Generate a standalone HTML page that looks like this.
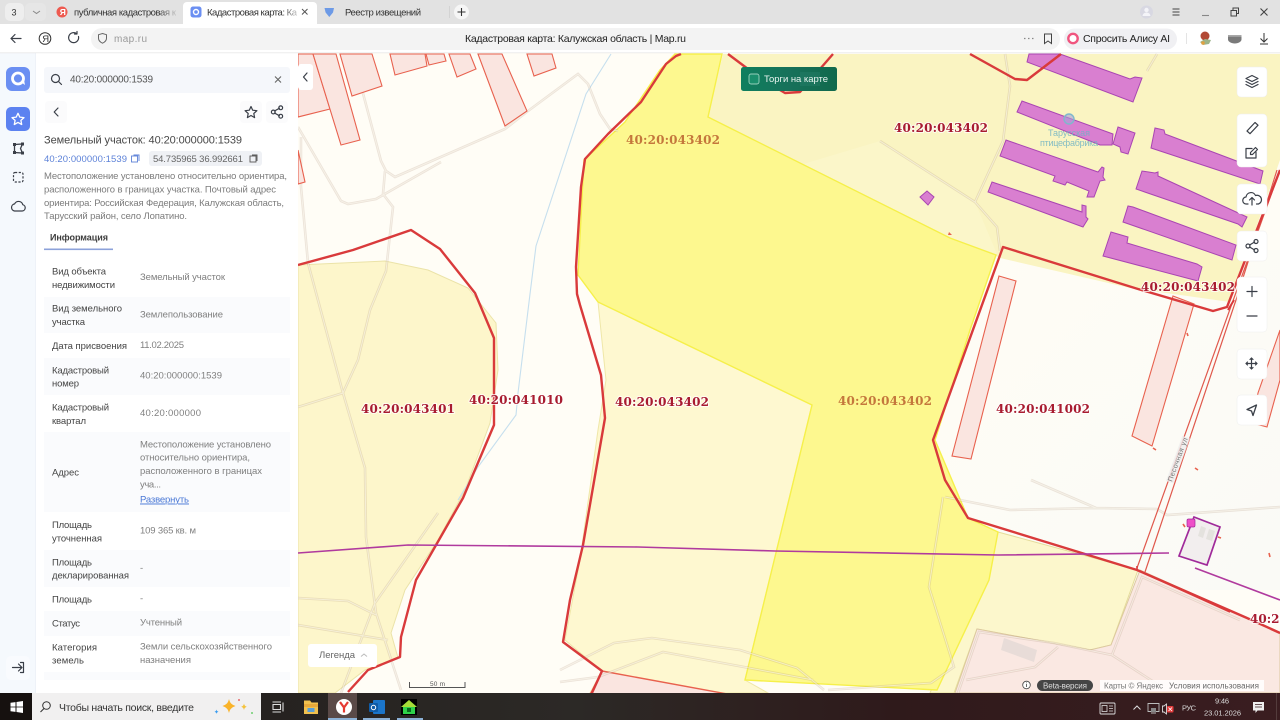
<!DOCTYPE html>
<html lang="ru"><head><meta charset="utf-8"><title>Кадастровая карта</title>
<style>
html,body{margin:0;padding:0;width:1280px;height:720px;overflow:hidden;background:#fff}
svg{display:block;position:absolute;left:0;top:0;filter:blur(.3px)}
text{font-family:"Liberation Sans",sans-serif}
.l{font-size:9.5px;fill:#444}
.v{font-size:9.5px;fill:#808080}
.d{font-size:9.5px;fill:#7c7c7c}
.lab{font-family:"DejaVu Serif",serif;font-weight:bold;font-size:12px;fill:#a81c30;paint-order:stroke;stroke:#fff;stroke-opacity:.75;stroke-width:2px}
.or{fill:#c4773c;stroke:none}
.rd{fill:none;stroke:#d93a3b;stroke-width:2.4;stroke-linejoin:round}
.pk{fill:#fae5e0;stroke:#e8614e;stroke-width:1.1}
.pb{fill:#d97fd0;stroke:#a945b2;stroke-width:1}
.ro{fill:none;stroke:#a88a70;stroke-opacity:.22;stroke-width:2.6}
.ri{fill:none;stroke:#fffdf3;stroke-opacity:.55;stroke-width:1}
.ic{fill:none;stroke:#3a3f48;stroke-width:1.2;stroke-linecap:round;stroke-linejoin:round}
</style></head><body>
<svg width="1280" height="720" viewBox="0 0 1280 720" xmlns="http://www.w3.org/2000/svg">
<defs>
<clipPath id="m"><rect x="298" y="53" width="982" height="640"/></clipPath>
<linearGradient id="tb" x1="0" x2="1"><stop offset="0" stop-color="#201c1b"/><stop offset=".45" stop-color="#2c2926"/><stop offset=".7" stop-color="#2f1a1b"/><stop offset="1" stop-color="#3a1d20"/></linearGradient>
<linearGradient id="fd" x1="0" x2="1"><stop offset=".82" stop-color="#333"/><stop offset="1" stop-color="#ccc"/></linearGradient>
<linearGradient id="gr" x1="0" x2="1"><stop offset="0" stop-color="#0f7f5e"/><stop offset=".5" stop-color="#17715a"/><stop offset="1" stop-color="#11694c"/></linearGradient>
<linearGradient id="wb" x1="0" y1="0" x2="1" y2="1"><stop offset="0" stop-color="#fffdf5"/><stop offset="1" stop-color="#fafaf6"/></linearGradient>
</defs>

<!-- MAP -->
<g clip-path="url(#m)">
<rect x="298" y="53" width="982" height="640" fill="#fffdf6"/>
<rect x="940" y="250" width="340" height="340" fill="url(#wb)"/>
<!-- zones -->
<polygon points="723,54 1280,54 1280,160 1230,302 1130,288 1000,258 994,255 950,238 708,117" fill="#faf4c2"/>
<polygon points="880,141 975,202 997,254 950,238 800,165" fill="#fbf6c9"/>
<polygon points="298,265 385,261 428,270 468,288 496,323 498,370 490,423 465,490 438,540 405,590 391,633 398,658 365,670 335,693 298,693" fill="#fdf6cb" stroke="#ebe3a8" stroke-width="1"/>
<polygon points="598,302 812,405 745,680 768,693 590,693 602,671 565,640 580,560 598,430 606,380" fill="#fef8d0" stroke="#efe7a8" stroke-width="1"/>
<polygon points="998,532 1138,570 1111,645 1090,650 977,629 954,693 930,693" fill="#fcf7cc" stroke="#e5dc9a" stroke-width="1"/>
<polygon points="955,693 977,629 1090,650 1111,645 1140,570 1280,633 1280,693" fill="#fae8e2" stroke="#dcc9a0" stroke-width="1"/>
<polygon points="675,54 722,54 708,117 950,238 996,255 970,330 935,440 968,518 998,532 989,580 937,690 745,680 812,405 598,302 578,275 584,160 625,122 660,70" fill="#fdf88f" stroke="#f6f04a" stroke-width="1.4"/>
<polygon points="602,671 760,700 580,700 591,693" fill="#fae5e0" stroke="#e8614e" stroke-width="1.4"/>
<!-- stream -->
<polyline points="611,54 586,94 536,246 530,294 518,393 516,415 478,467 458,500" fill="none" stroke="#c6dfee" stroke-width="1.1"/>
<!-- roads -->
<path class="ro" d="M343 54L356 67L381 161L386 171L395 177L505 129L528 111L578 74L588 84L600 114L610 129L618 131M298 127L305 139L341 201L348 204L376 199L441 162M385 171L383 194L393 207L386 271L370 310L358 360L343 393L365 468L366 537L376 613L401 690M301 137L301 187L308 263L343 393M298 407L343 393M298 598L348 601L376 615M298 625L388 640M341 693L375 603L438 513M560 670L614 643L652 638L740 650L797 668L824 690M560 682L598 677L663 652L744 667L813 680M943 497L929 587L954 667L931 683L828 690M945 497L1010 510L1096 508L1157 509L1167 515L1280 507M1031 480L1096 508M966 680L1035 667L1058 647M958 693L979 632L1054 643L1112 655L1160 686M1112 655L1142 577L1240 620M1005 54L1010 86L1003 141L975 202L997 227L1000 251M880 141L975 202M1157 54L1147 71"/>
<path class="ri" d="M343 54L356 67L381 161L386 171L395 177L505 129L528 111L578 74L588 84L600 114L610 129L618 131M298 127L305 139L341 201L348 204L376 199L441 162M385 171L383 194L393 207L386 271L370 310L358 360L343 393L365 468L366 537L376 613L401 690M301 137L301 187L308 263L343 393M298 407L343 393M298 598L348 601L376 615M298 625L388 640M341 693L375 603L438 513M560 670L614 643L652 638L740 650L797 668L824 690M560 682L598 677L663 652L744 667L813 680M943 497L929 587L954 667L931 683L828 690M945 497L1010 510L1096 508L1157 509L1167 515L1280 507M1031 480L1096 508M966 680L1035 667L1058 647M958 693L979 632L1054 643L1112 655L1160 686M1112 655L1142 577L1240 620M1005 54L1010 86L1003 141L975 202L997 227L1000 251M880 141L975 202M1157 54L1147 71"/>
<!-- pink parcels -->
<polygon class="pk" points="298,54 313,54 330,109 298,117"/>
<polygon class="pk" points="298,150 305,182 298,184"/>
<polygon class="pk" points="313,54 336,54 360,140 341,145"/>
<polygon class="pk" points="340,54 372,54 382,86 352,96"/>
<polygon class="pk" points="390,54 425,54 427,66 395,75"/>
<polygon class="pk" points="426,54 444,54 446,61 429,65"/>
<polygon class="pk" points="449,54 470,54 476,69 457,77"/>
<polygon class="pk" points="478,54 502,54 527,111 505,126"/>
<polygon class="pk" points="527,54 552,54 556,68 534,76"/>
<polygon class="pk" points="999,276 1016,281 971,459 952,456"/>
<polygon class="pk" points="1173,296 1194,304 1152,446 1132,436"/>
<polygon class="pk" points="1280,330 1258,393 1252,423 1267,427 1280,380"/>
<path d="M1153 448l3 2M1187 333l1 3M1195 468l3 2M1269 553l1 4M1183 524l2 3M1218 537l3 1" stroke="#e8614e" stroke-width="1.6" fill="none"/>
<!-- road parcel lines -->
<path d="M1280 170L1137 568M1236 300L1145 572M1277 170L1236 300" fill="none" stroke="#e0584c" stroke-width="1.2"/>
<path d="M1234 300L1228 310" stroke="#d93a3b" stroke-width="2"/>
<!-- buildings -->
<polygon class="pb" points="1027,62 1029,54 1060,54 1130,79 1135,77 1142,78 1133,102"/>
<polygon class="pb" points="1017,112 1022,101 1113,134 1112,145 1100,145"/>
<polygon class="pb" points="1118,127 1135,133 1128,154 1121,152 1120,147 1113,144"/>
<polygon class="pb" points="1000,156 1006,140 1098,172 1102,167 1104,168 1103,177 1105,180 1100,181 1094,197 1087,197 1089,191 1067,182 1065,185 1053,181 1055,176"/>
<polygon class="pb" points="988,192 992,182 1082,212 1082,205 1086,206 1086,217 1088,219 1083,227"/>
<polygon class="pb" points="1151,148 1155,128 1164,130 1165,134 1263,171 1260,184"/>
<polygon class="pb" points="1136,189 1142,171 1155,173 1158,172 1158,176 1247,217 1242,227 1238,224"/>
<polygon class="pb" points="1123,222 1128,206 1133,207 1236,245 1232,260"/>
<polygon class="pb" points="1103,256 1111,232 1128,237 1127,243 1197,264 1202,267 1198,281"/>
<polygon class="pb" points="920,197 927,191 934,197 928,205"/>
<path d="M949 232l3 3l-4 0z" fill="#e8614e"/>
<circle cx="1069" cy="119" r="5" fill="#a8a0d8" fill-opacity=".6" stroke="#7fb8cc" stroke-width="1.4"/>
<text x="1048" y="136" font-size="9" fill="#6fb3c4" textLength="42" lengthAdjust="spacing" opacity=".85">Тарусская</text>
<text x="1040" y="146" font-size="9" fill="#6fb3c4" textLength="58" lengthAdjust="spacing" opacity=".85">птицефабрика</text>
<!-- cadastral red lines -->
<polyline class="rd" points="298,265 353,250 411,230 440,249 475,293 494,338 494,425 463,498 416,580 401,637 400,657 368,670 348,692"/>
<polyline class="rd" points="681,54 676,56 666,64 641,102 608,134 585,159 581,187 576,267 577,294 580,305 601,375 605,418 583,545 570,600 563,642 602,671 591,695"/>
<polyline class="rd" points="728,54 760,78 785,93 800,92 833,54"/>
<polyline class="rd" points="970,54 1015,79 1027,80 1061,54"/>
<polyline class="rd" points="1280,170 1227,307 1213,311 1138,289 1003,247 933,440 945,480 968,518 1137,570 1247,618 1280,633"/>
<path d="M1137 566L1137 570L1230 612" fill="none" stroke="#d93a3b" stroke-width="1.6"/>
<!-- magenta line -->
<polyline points="298,553 408,545 638,547 775,551 998,555 1169,553" fill="none" stroke="#b03a9e" stroke-width="1.6"/>
<polyline points="1195,568 1280,600" fill="none" stroke="#b03a9e" stroke-width="1.6"/>
<!-- small building -->
<polygon points="1194,517 1220,527 1207,565 1179,556" fill="#f2eeee" stroke="#a02a9a" stroke-width="1.7"/>
<polygon points="1201,526 1206,528 1203,538 1198,536" fill="#e4e2de"/>
<polygon points="1209,529 1215,531 1212,541 1206,539" fill="#e4e2de"/>
<rect x="1187" y="519" width="8" height="8" rx="1.5" fill="#ee4fc8" stroke="#a02a9a" stroke-width=".7"/>
<!-- gray building -->
<polygon points="1004,638 1037,650 1034,662 1001,650" fill="#e8dcd8"/>
<!-- street name -->
<g transform="translate(1172,482) rotate(-70)"><rect x="-1" y="-6" width="48" height="8" fill="#eee" fill-opacity=".8"/><text x="0" y="0" font-size="7" fill="#777" textLength="46" lengthAdjust="spacing">Песочная ул</text></g>
<!-- labels -->
<text class="lab or" x="626" y="144" textLength="94">40:20:043402</text>
<text class="lab" x="894" y="132" textLength="94">40:20:043402</text>
<text class="lab" x="1141" y="291" textLength="94">40:20:043402</text>
<text class="lab" x="361" y="413" textLength="94">40:20:043401</text>
<text class="lab" x="469" y="404" textLength="94">40:20:041010</text>
<text class="lab" x="615" y="406" textLength="94">40:20:043402</text>
<text class="lab or" x="838" y="405" textLength="94">40:20:043402</text>
<text class="lab" x="996" y="413" textLength="94">40:20:041002</text>
<text class="lab" x="1250" y="623">40:20:043402</text>
</g>

<!-- Map controls -->
<rect x="298" y="64" width="15" height="26" rx="3" fill="#fff"/>
<path class="ic" d="M307 73l-3.500 4l3.500 4"/>
<rect x="741" y="67" width="96" height="24" rx="2.500" fill="url(#gr)"/>
<rect x="749" y="74" width="10" height="10" rx="2" fill="#1a8f6c" stroke="#bfe6d6" stroke-width=".7"/>
<rect x="800" y="72" width="20" height="14" fill="#2b8470" opacity=".35"/>
<text x="764" y="82" font-size="9.500" fill="#e9f5f0" textLength="64" lengthAdjust="spacing">Торги на карте</text>

<g fill="#fff" stroke="#eee" stroke-width=".5">
<rect x="1237" y="67" width="30" height="30" rx="4"/>
<rect x="1237" y="114" width="30" height="53" rx="4"/>
<rect x="1237" y="184" width="30" height="30" rx="4"/>
<rect x="1237" y="231" width="30" height="30" rx="4"/>
<rect x="1237" y="277" width="30" height="55" rx="4"/>
<rect x="1237" y="349" width="30" height="30" rx="4"/>
<rect x="1237" y="395" width="30" height="30" rx="4"/>
</g>
<!-- layers -->
<path class="ic" d="M1252 75.500l6 3l-6 3l-6-3zM1246 81.500l6 3l6-3M1246 84.500l6 3l6-3"/>
<!-- ruler -->
<path class="ic" d="M1247 131l8-8.500l3 2.700l-8 8.500z"/>
<!-- edit -->
<path class="ic" d="M1252 148.500h-6v9.500h10v-6M1250.500 154.500v-2l5-5l2 2l-5 5z"/>
<!-- cloud up -->
<path class="ic" d="M1248 204h-1.500a3.500 3.500 0 0 1-.5-7a5 5 0 0 1 9.500-1.500a4.500 4.500 0 0 1 3 8.500h-2M1252 205v-7M1249.500 200l2.500-2.500l2.500 2.500"/>
<!-- share -->
<path class="ic" d="M1249.600 245l5-3M1249.600 247l5 3"/>
<circle class="ic" cx="1248" cy="246" r="2"/><circle class="ic" cx="1256" cy="241.500" r="2"/><circle class="ic" cx="1256" cy="250.500" r="2"/>
<path class="ic" d="M1252 286.500v10M1247 291.500h10M1247 316h10" stroke-width="1.400"/>
<!-- move -->
<path class="ic" d="M1251.500 358v11M1246 363.500h11M1250 359.500l1.500-1.500l1.500 1.500M1250 367.500l1.500 1.500l1.500-1.500M1247.500 362l-1.500 1.500l1.500 1.500M1255.500 362l1.500 1.500l-1.500 1.500"/>
<!-- locate -->
<path d="M1256.500 405l-3.500 10.500l-1.500-4.500l-4.500-1.500z" fill="none" stroke="#3a3f48" stroke-width="1.300" stroke-linejoin="round"/>

<rect x="308" y="644" width="69" height="23" rx="3" fill="#fff"/>
<text x="319" y="658" font-size="9.500" fill="#666" textLength="36" lengthAdjust="spacing">Легенда</text>
<path d="M361 656.500l3-2.500l3 2.500" fill="none" stroke="#bbb" stroke-width="1"/>
<path d="M409.500 682v5.500h55.500v-5.500" fill="none" stroke="#555" stroke-width="1"/>
<text x="430" y="686" font-size="6.500" fill="#555" textLength="15" lengthAdjust="spacing">50 m</text>
<circle cx="1026.500" cy="685" r="3.800" fill="#fff" stroke="#444" stroke-width=".8"/>
<path d="M1026.500 684v3M1026.500 682.500v.8" stroke="#444" stroke-width=".8"/>
<rect x="1037" y="680" width="56" height="11" rx="5.500" fill="#454545"/>
<text x="1043" y="688.500" font-size="8" fill="#ddd" textLength="44" lengthAdjust="spacing">Beta-версия</text>
<rect x="1100" y="680" width="164" height="11" fill="#fff" fill-opacity=".85"/>
<text x="1104" y="688.500" font-size="8" fill="#777" textLength="59" lengthAdjust="spacing">Карты © Яндекс</text>
<text x="1169" y="688.500" font-size="8" fill="#666" textLength="90" lengthAdjust="spacing">Условия использования</text>

<!-- LEFT RAIL + PANEL -->
<rect x="0" y="53" width="36" height="640" fill="#f5f9fd"/>
<rect x="35.500" y="53" width=".8" height="640" fill="#e6ecf3"/>
<rect x="36" y="53" width="262" height="640" fill="#fff"/>
<rect x="6" y="67" width="24" height="24" rx="6" fill="#6b8ff2"/>
<circle cx="18" cy="78.500" r="5.500" fill="none" stroke="#fff" stroke-width="2.800"/>
<path d="M21 82l4 3l-1-5z" fill="#fff"/>
<rect x="6" y="107" width="24" height="24" rx="5" fill="#5c82f0"/>
<path d="M18 113.300l1.800 3.800l4.200.5l-3.100 2.800l.8 4.100l-3.700-2.100l-3.700 2.100l.8-4.100l-3.100-2.800l4.200-.5z" fill="none" stroke="#fff" stroke-width="1.300" stroke-linejoin="round"/>
<path d="M14.500 144.500l8 -.5l-2 4.500l2 4.500l-8 -.5z" fill="none" stroke="#3a3f48" stroke-width="1.300"/>
<rect x="13" y="143" width="3" height="3" fill="#3a3f48"/><rect x="21" y="142.500" width="3" height="3" fill="#3a3f48"/><rect x="13" y="151" width="3" height="3" fill="#3a3f48"/><rect x="21" y="151.500" width="3" height="3" fill="#3a3f48"/>
<rect x="13.500" y="172.500" width="9.500" height="9.500" rx="1.500" fill="none" stroke="#3a3f48" stroke-width="1.200" stroke-dasharray="2.200 1.500"/>
<path class="ic" d="M14.500 211h7.500a3.200 3.200 0 0 0 .8-6.300a4.400 4.400 0 0 0-8.200-.8a3.600 3.600 0 0 0-.1 7.100z"/>
<rect x="6" y="656" width="24" height="24" rx="5" fill="#f9fbfe"/>
<path class="ic" d="M12.500 667.500h9M18.500 664l3.500 3.500l-3.500 3.500M20.500 662.500h3v10h-3"/>

<rect x="44" y="67" width="246" height="26" rx="3" fill="#f5f7fb"/>
<circle class="ic" cx="55.500" cy="78.500" r="4" stroke-width="1.300"/><path class="ic" d="M58.500 81.500l3 3" stroke-width="1.300"/>
<text x="70" y="82.500" font-size="10" fill="#555" textLength="83" lengthAdjust="spacing">40:20:000000:1539</text>
<path d="M275 76.500l6 6M281 76.500l-6 6" stroke="#666" stroke-width="1.100"/>
<rect x="45" y="101" width="22" height="22" rx="4" fill="#fbfbfc"/>
<path class="ic" d="M58 108l-3.800 4l3.800 4"/>
<rect x="240" y="101" width="22" height="22" rx="4" fill="#fbfbfc"/><rect x="266" y="101" width="22" height="22" rx="4" fill="#fbfbfc"/>
<path d="M251 106.500l1.700 3.700l4.200.5l-3.100 2.800l.8 4.100l-3.600-2.100l-3.600 2.100l.8-4.100l-3.100-2.800l4.200-.5z" fill="none" stroke="#3a3f48" stroke-width="1.200" stroke-linejoin="round"/>
<path class="ic" d="M274.500 111l5-2.800M274.500 113l5 2.800"/>
<circle class="ic" cx="273.300" cy="112" r="1.900"/><circle class="ic" cx="280.700" cy="107.800" r="1.900"/><circle class="ic" cx="280.700" cy="116.200" r="1.900"/>

<text x="44" y="143.500" font-size="11" fill="#484848" textLength="198" lengthAdjust="spacing">Земельный участок: 40:20:000000:1539</text>
<text x="44" y="162" font-size="9.500" fill="#5d82d8" textLength="83" lengthAdjust="spacing">40:20:000000:1539</text>
<rect x="131.500" y="156" width="6" height="6" fill="none" stroke="#5d82d8" stroke-width=".9"/><path d="M133.500 155h5.500v6" fill="none" stroke="#5d82d8" stroke-width=".9"/>
<rect x="149" y="151" width="113" height="15" rx="3" fill="#eff1f5"/>
<text x="153" y="162" font-size="9.500" fill="#666" textLength="90" lengthAdjust="spacing">54.735965 36.992661</text>
<rect x="250" y="156" width="6" height="6" fill="none" stroke="#555" stroke-width=".9"/><path d="M252 155h5v6" fill="none" stroke="#555" stroke-width=".9"/>

<text class="d" x="44" y="179" textLength="243" lengthAdjust="spacing">Местоположение установлено относительно ориентира,</text>
<text class="d" x="44" y="192.500" textLength="232" lengthAdjust="spacing">расположенного в границах участка. Почтовый адрес</text>
<text class="d" x="44" y="206" textLength="240" lengthAdjust="spacing">ориентира: Российская Федерация, Калужская область,</text>
<text class="d" x="44" y="219" textLength="143" lengthAdjust="spacing">Тарусский район, село Лопатино.</text>
<text x="50" y="240.500" font-size="9" font-weight="bold" fill="#3c3c3c" textLength="58" lengthAdjust="spacing">Информация</text>
<rect x="44" y="248.500" width="69" height="1.600" fill="#8ca2da"/>

<g fill="#fafbfd">
<rect x="44" y="297" width="246" height="36"/>
<rect x="44" y="358" width="246" height="37"/>
<rect x="44" y="432" width="246" height="80"/>
<rect x="44" y="550" width="246" height="37"/>
<rect x="44" y="611" width="246" height="25"/>
<rect x="44" y="672" width="246" height="8"/>
</g>
<text class="l" x="52" y="274.500" textLength="54" lengthAdjust="spacing">Вид объекта</text>
<text class="l" x="52" y="288" textLength="63" lengthAdjust="spacing">недвижимости</text>
<text class="v" x="140" y="280" textLength="85" lengthAdjust="spacing">Земельный участок</text>
<text class="l" x="52" y="311.500" textLength="70" lengthAdjust="spacing">Вид земельного</text>
<text class="l" x="52" y="325" textLength="33" lengthAdjust="spacing">участка</text>
<text class="v" x="140" y="317.500" textLength="83" lengthAdjust="spacing">Землепользование</text>
<text class="l" x="52" y="349" textLength="75" lengthAdjust="spacing">Дата присвоения</text>
<text class="v" x="140" y="348" textLength="44" lengthAdjust="spacing">11.02.2025</text>
<text class="l" x="52" y="373.500" textLength="57" lengthAdjust="spacing">Кадастровый</text>
<text class="l" x="52" y="386.500" textLength="27" lengthAdjust="spacing">номер</text>
<text class="v" x="140" y="378.500" textLength="82" lengthAdjust="spacing">40:20:000000:1539</text>
<text class="l" x="52" y="410.500" textLength="57" lengthAdjust="spacing">Кадастровый</text>
<text class="l" x="52" y="424" textLength="34" lengthAdjust="spacing">квартал</text>
<text class="v" x="140" y="416" textLength="61" lengthAdjust="spacing">40:20:000000</text>
<text class="l" x="52" y="475.500" textLength="27" lengthAdjust="spacing">Адрес</text>
<text class="v" x="140" y="447.500" textLength="131" lengthAdjust="spacing">Местоположение установлено</text>
<text class="v" x="140" y="460.500" textLength="110" lengthAdjust="spacing">относительно ориентира,</text>
<text class="v" x="140" y="474" textLength="122" lengthAdjust="spacing">расположенного в границах</text>
<text class="v" x="140" y="487.500" textLength="21" lengthAdjust="spacing">уча...</text>
<text x="140" y="502.500" font-size="9.500" fill="#4a78d6" text-decoration="underline" textLength="49" lengthAdjust="spacing">Развернуть</text>
<text class="l" x="52" y="528" textLength="40" lengthAdjust="spacing">Площадь</text>
<text class="l" x="52" y="541.500" textLength="50" lengthAdjust="spacing">уточненная</text>
<text class="v" x="140" y="533.500" textLength="56" lengthAdjust="spacing">109 365 кв. м</text>
<text class="l" x="52" y="565.500" textLength="40" lengthAdjust="spacing">Площадь</text>
<text class="l" x="52" y="578.500" textLength="77" lengthAdjust="spacing">декларированная</text>
<text class="v" x="140" y="571">-</text>
<text class="l" x="52" y="602.500" textLength="40" lengthAdjust="spacing">Площадь</text>
<text class="v" x="140" y="601.500">-</text>
<text class="l" x="52" y="626.500" textLength="28" lengthAdjust="spacing">Статус</text>
<text class="v" x="140" y="625.500" textLength="42" lengthAdjust="spacing">Учтенный</text>
<text class="l" x="52" y="650.500" textLength="45" lengthAdjust="spacing">Категория</text>
<text class="l" x="52" y="663.500" textLength="32" lengthAdjust="spacing">земель</text>
<text class="v" x="140" y="649.500" textLength="132" lengthAdjust="spacing">Земли сельскохозяйственного</text>
<text class="v" x="140" y="663" textLength="51" lengthAdjust="spacing">назначения</text>

<!-- BROWSER CHROME -->
<rect x="0" y="0" width="1280" height="24" fill="#e2e2e2"/>
<rect x="0" y="24" width="1280" height="29" fill="#fff"/>
<rect x="0" y="52.500" width="1280" height=".7" fill="#e3e3e3"/>
<rect x="5" y="3" width="19" height="18" rx="5" fill="#eeeeee"/>
<text x="11.500" y="15.500" font-size="9" fill="#333">3</text>
<rect x="25" y="3" width="21" height="18" rx="5" fill="#e6e6e6"/>
<path d="M33 11l3.500 2.500l3.500-2.500" fill="none" stroke="#888" stroke-width="1"/>
<circle cx="62" cy="12" r="5.500" fill="#ee5a50"/>
<text x="59.700" y="15.200" font-size="8.500" fill="#fff" font-weight="bold">Я</text>
<text x="74" y="15.500" font-size="9.500" fill="url(#fd)" textLength="102" lengthAdjust="spacing">публичная кадастровая к</text>
<path d="M183 24V6a4 4 0 0 1 4-4h126a4 4 0 0 1 4 4v18z" fill="#fff"/>
<rect x="190.500" y="6.500" width="11" height="11" rx="2.500" fill="#6b8ff2"/>
<circle cx="196" cy="12" r="2.500" fill="none" stroke="#fff" stroke-width="1.400"/>
<text x="207" y="15.500" font-size="9.500" fill="url(#fd)" textLength="90" lengthAdjust="spacing">Кадастровая карта: Ка</text>
<path d="M302 9l5.500 5.500M307.500 9l-5.500 5.500" stroke="#555" stroke-width="1"/>
<path d="M324.500 8h9.500l-1 4.500l-3.700 4.500l-3.700-4.500z" fill="#6d9ae6"/>
<text x="345" y="15.500" font-size="9.500" fill="#333" textLength="76" lengthAdjust="spacing">Реестр извещений</text>
<rect x="449" y="6" width=".8" height="12" fill="#cfcfcf"/>
<circle cx="461.500" cy="12" r="7.500" fill="#f6f6f6"/>
<path d="M461.500 8v8M457.500 12h8" stroke="#333" stroke-width="1.100"/>
<circle cx="1146.500" cy="12" r="6.500" fill="#d8d8e2"/>
<circle cx="1146.500" cy="10" r="2.200" fill="#f4f4f8"/><path d="M1142.500 16a4 3.500 0 0 1 8 0z" fill="#f4f4f8"/>
<path d="M1172.500 9h7M1172.500 12h7M1172.500 15h7" stroke="#444" stroke-width="1"/>
<path d="M1202 15.500h7" stroke="#888" stroke-width="1.100"/>
<path d="M1231 10.500h5.500v5.500h-5.500zM1233 10.500v-2.500h5.500v5.500h-2" fill="none" stroke="#444" stroke-width="1"/>
<path d="M1260.500 8.500l7 7M1267.500 8.500l-7 7" stroke="#444" stroke-width="1.100"/>

<path class="ic" d="M11 38.500h10M15 34.500l-4 4l4 4" stroke-width="1.100"/>
<circle cx="45" cy="38.500" r="5.800" fill="none" stroke="#333" stroke-width="1"/>
<text x="42.200" y="42" font-size="9.500" fill="#333">Я</text>
<path class="ic" d="M78.500 36.500a5 5 0 1 1-1.800-2.800M77 31.500v2.500h-2.500" stroke-width="1.100"/>
<rect x="91" y="28" width="969" height="22" rx="11" fill="#f3f3f3"/>
<path d="M102.500 33.500l4 1.200v3.500c0 2.500-2 4-4 5c-2-1-4-2.500-4-5v-3.500z" fill="none" stroke="#666" stroke-width="1"/>
<text x="114" y="42" font-size="10" fill="#9a9a9a" textLength="33" lengthAdjust="spacing">map.ru</text>
<text x="465" y="42" font-size="10.500" fill="#222" textLength="221" lengthAdjust="spacing">Кадастровая карта: Калужская область | Map.ru</text>
<path d="M1024 38.500h1.500M1028 38.500h1.500M1032 38.500h1.500" stroke="#888" stroke-width="1.200"/>
<path d="M1044.500 34h7v9.500l-3.500-2.500l-3.500 2.500z" fill="none" stroke="#444" stroke-width="1"/>
<rect x="1064" y="28.500" width="113" height="21" rx="10.500" fill="#f0f0f3"/>
<circle cx="1073" cy="38.500" r="4.700" fill="#fff" stroke="#f0557f" stroke-width="2.400"/>
<text x="1083" y="42" font-size="10.500" fill="#222" textLength="87" lengthAdjust="spacing">Спросить Алису AI</text>
<rect x="1186" y="33" width=".8" height="11" fill="#ddd"/>
<circle cx="1205" cy="36" r="4.500" fill="#b24a35"/>
<path d="M1200 42l5-3l6 1l-2 4l-6 1z" fill="#9db48a"/><circle cx="1203" cy="43" r="1.800" fill="#e0a040"/>
<path d="M1228 36h13.500v3.500c0 2-3 4-6.700 4s-6.800-2-6.800-4z" fill="#7a7a7a"/><rect x="1228" y="35" width="13.500" height="1.800" fill="#a8a8a8"/>
<path d="M1264 33v8.500M1260.500 38.500l3.500 3.500l3.500-3.500M1260 44h8" fill="none" stroke="#333" stroke-width="1"/>

<!-- TASKBAR -->
<rect x="0" y="693" width="1280" height="27" fill="url(#tb)"/>
<rect x="0" y="693" width="32" height="27" fill="#16110f"/>
<rect x="32" y="693" width="229" height="27" fill="#f1f0f0"/>
<path d="M10.500 702.800l5-.7v4.500h-5zM16.500 702l6.500-1v5.600h-6.500zM10.500 707.400h5v4.500l-5-.7zM16.500 707.400h6.500v5.600l-6.500-1z" fill="#fff"/>
<circle cx="46.500" cy="705.500" r="3.800" fill="none" stroke="#333" stroke-width="1"/><path d="M44 708.500l-3.500 3.500" stroke="#333" stroke-width="1.100"/>
<text x="59" y="711" font-size="10.500" fill="#333" textLength="135" lengthAdjust="spacing">Чтобы начать поиск, введите</text>
<path d="M229 699c1 4 2.500 5.500 6.500 7c-4 1.500-5.500 3-6.500 7c-1-4-2.500-5.500-6.500-7c4-1.500 5.500-3 6.500-7z" fill="#f9b32a"/>
<path d="M244 703.500c.5 2 1 2.700 3 3.300c-2 .7-2.500 1.300-3 3.300c-.5-2-1-2.600-3-3.300c2-.6 2.500-1.300 3-3.300z" fill="#f4c23c"/>
<path d="M216.500 709.500c.3 1.400.7 1.800 2 2.200c-1.300.4-1.700.8-2 2.200c-.3-1.400-.7-1.800-2-2.200c1.300-.4 1.700-.8 2-2.200z" fill="#3a9cf0"/>
<circle cx="239" cy="700" r="1" fill="#e76a6a"/><circle cx="252" cy="713" r="1" fill="#6fcf6f"/>
<path d="M272.500 702h8.500M272.500 712h8.500M273 704.500h7.500v5h-7.500zM283 702.500v9" fill="none" stroke="#ddd" stroke-width="1.100"/>
<path d="M304 700.500h6l1.500 2h6.500v11.500h-14z" fill="#f1c14e"/><rect x="304" y="704" width="14" height="3" fill="#e8a93a"/><rect x="307.500" y="708" width="7" height="4" fill="#5a9fd6"/>
<rect x="328" y="693" width="29" height="27" fill="#5a4a48"/>
<circle cx="344" cy="707" r="8" fill="#fff"/>
<path d="M340 702l4 5.500v5M348 702l-4 5.500" fill="none" stroke="#e53a32" stroke-width="2.200"/>
<rect x="328" y="718" width="29" height="2" fill="#8cb1d6"/>
<rect x="373" y="700" width="12" height="14" rx="1" fill="#1b75c9"/>
<rect x="369" y="703" width="9" height="9" rx="1" fill="#0f5ba6"/><circle cx="373.500" cy="707.500" r="2.200" fill="none" stroke="#fff" stroke-width="1"/>
<rect x="363" y="718" width="27" height="2" fill="#8cb1d6"/>
<rect x="401" y="699" width="16" height="16" fill="#000"/>
<path d="M409 700l8 7h-2v7h-12v-7h-2z" fill="#2fd24a"/><path d="M409 700l8 7h-16z" fill="#d8e030" fill-opacity=".7"/><rect x="407" y="708" width="4" height="4" fill="#0a6a20"/>
<rect x="397" y="718" width="26" height="2" fill="#8cb1d6"/>
<rect x="1100" y="703" width="15" height="11" rx="1" fill="none" stroke="#ddd" stroke-width=".9"/><rect x="1102" y="705.500" width="5" height="6" fill="none" stroke="#ddd" stroke-width=".8"/><path d="M1109 706h4M1109 708.500h4M1109 711h4" stroke="#ddd" stroke-width=".8"/>
<path d="M1133.500 709.500l3.500-3.500l3.500 3.500" fill="none" stroke="#ddd" stroke-width="1"/>
<path d="M1148 703.500h11v8h-11zM1151 713h5" fill="none" stroke="#bbb" stroke-width=".9"/><rect x="1151" y="708" width="5" height="4" fill="#888"/>
<path d="M1164 706l2.500-2v10l-2.500-2h-1.500v-6z" fill="none" stroke="#ddd" stroke-width=".9"/>
<rect x="1167" y="706" width="6.500" height="6.500" rx="1" fill="#e23b3b"/><path d="M1168.500 707.500l3.500 3.500M1172 707.500l-3.500 3.500" stroke="#fff" stroke-width=".8"/>
<text x="1182" y="710.500" font-size="7.500" fill="#ddd" textLength="14" lengthAdjust="spacing">РУС</text>
<text x="1215" y="703.500" font-size="7.500" fill="#ddd" textLength="14" lengthAdjust="spacing">9:46</text>
<text x="1204" y="715.500" font-size="7.500" fill="#ddd" textLength="37" lengthAdjust="spacing">23.01.2026</text>
<path d="M1253 702h11v8.500h-6.500l-2 2.500v-2.500h-2.500z" fill="#eee"/><path d="M1255 704.500h7M1255 707h7" stroke="#3a1d20" stroke-width=".8"/>
<rect x="1276" y="693" width=".8" height="27" fill="#5a4444"/>
</svg>
</body></html>
